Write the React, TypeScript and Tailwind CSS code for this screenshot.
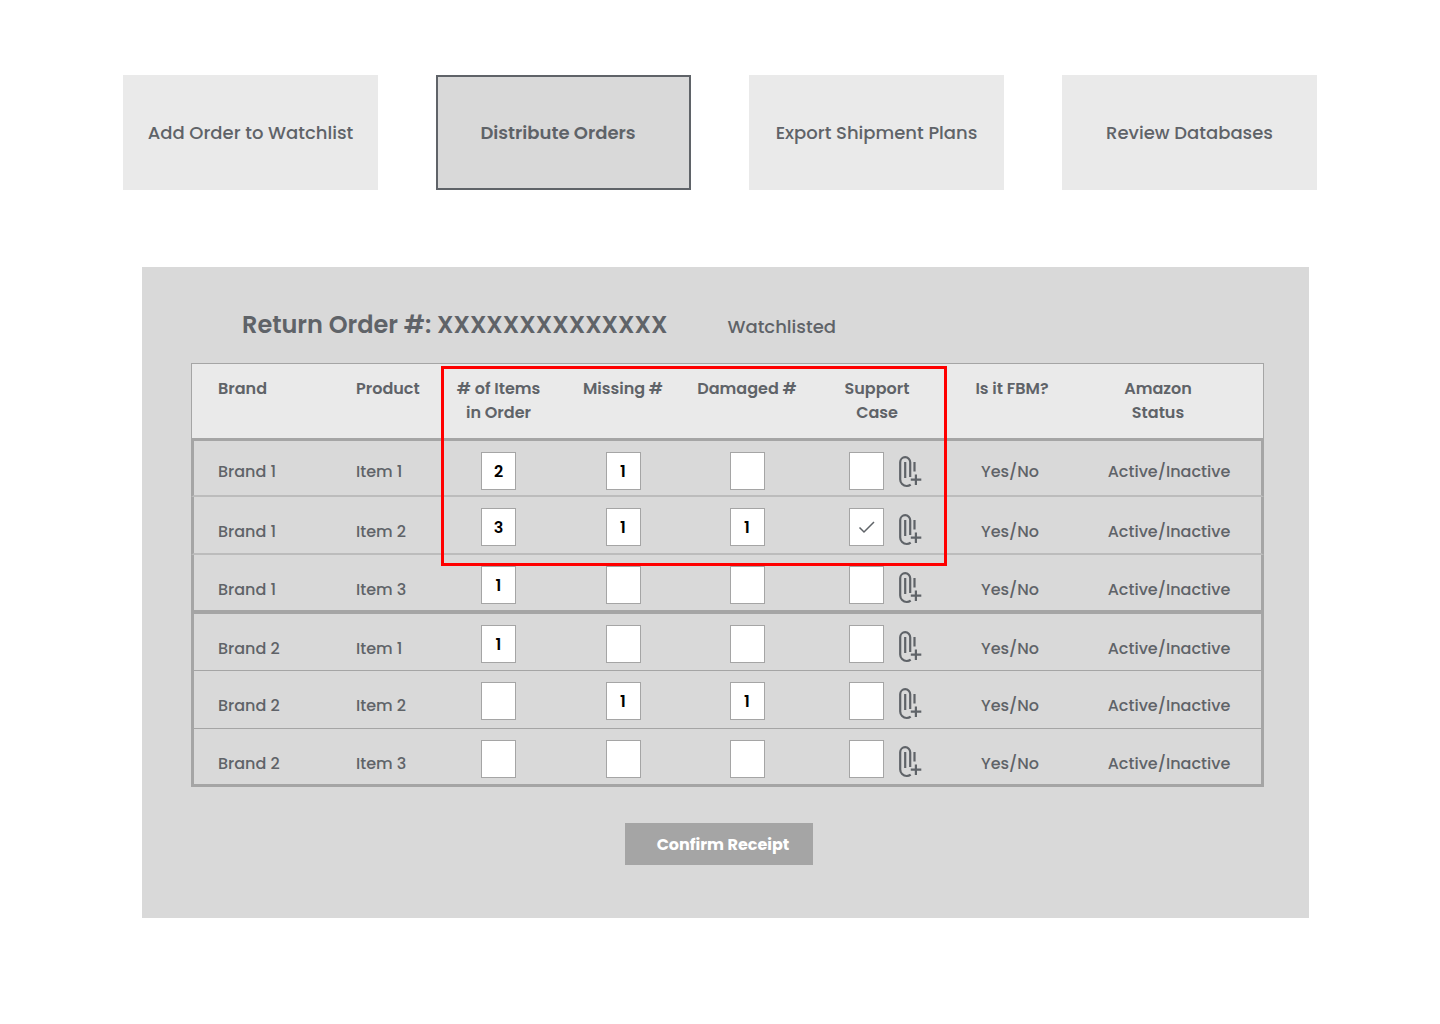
import { useState } from "react";
import clsx from "clsx";

const tabs = ["Add Order to Watchlist", "Distribute Orders", "Export Shipment Plans", "Review Databases"];

const columns = [
    { label: "Brand", width: "w-[138px]", align: "pl-[26px] text-left" },
    { label: "Product", width: "w-[107px]", align: "pl-[27px] text-left" },
    { label: "# of Items in Order", width: "w-[125px]", align: "px-4 text-center" },
    { label: "Missing #", width: "w-[124px]", align: "text-center" },
    { label: "Damaged #", width: "w-[124px]", align: "text-center" },
    { label: "Support Case", width: "w-[136px]", align: "px-8 text-center" },
    { label: "Is it FBM?", width: "w-[134px]", align: "text-center" },
    { label: "Amazon Status", width: "w-[185px]", align: "pl-10 pr-[66px] text-center" },
];

const rows = [
    { brand: "Brand 1", product: "Item 1", items: "2", missing: "1", damaged: "", support: false, line: "border-b-2 border-b-[#bcbcbc]", height: "h-[56px]" },
    { brand: "Brand 1", product: "Item 2", items: "3", missing: "1", damaged: "1", support: true, line: "border-b-2 border-b-[#bcbcbc]", height: "h-[58px]" },
    { brand: "Brand 1", product: "Item 3", items: "1", missing: "", damaged: "", support: false, line: "border-b-4", height: "h-[59px]" },
    { brand: "Brand 2", product: "Item 1", items: "1", missing: "", damaged: "", support: false, line: "border-b", height: "h-[57px]" },
    { brand: "Brand 2", product: "Item 2", items: "", missing: "1", damaged: "1", support: false, line: "border-b", height: "h-[58px]" },
    { brand: "Brand 2", product: "Item 3", items: "", missing: "", damaged: "", support: false, line: "border-b-3", height: "h-[58px]" },
];

function AttachIcon() {
    return (
        <svg viewBox="0 0 24 32" className="h-8 w-6" fill="none" stroke="currentColor" strokeWidth="2.2">
            <path d="M12.200 21V6.200a5 5 0 0 0-10 0v17.300a6.500 6.500 0 0 0 6.500 6.500c1.600 0 2.800-.4 4-1.300" />
            <path d="M7.200 6v16M16.500 6v9.500M17.900 18.500v10.500M12.800 23.700h10.500" />
        </svg>
    );
}

function QuantityBox({ label, value }: { label: string; value: string }) {
    return (
        <input
            type="text"
            aria-label={label}
            defaultValue={value}
            className="mx-auto block h-[38px] w-[35px] border border-[#a5a5a5] bg-white text-center text-base font-semibold text-black"
        />
    );
}

function SupportCase({ label, checked }: { label: string; checked: boolean }) {
    return (
        <div className="flex items-start gap-[14px] pl-10">
            <span className="relative block h-[38px] w-[35px]">
                <input
                    type="checkbox"
                    aria-label={label}
                    defaultChecked={checked}
                    className="peer block h-full w-full appearance-none border border-[#a5a5a5] bg-white"
                />
                <svg
                    viewBox="0 0 35 38"
                    className="pointer-events-none absolute inset-0 hidden peer-checked:block"
                    fill="none"
                    stroke="#5f6368"
                    strokeWidth="1.5"
                >
                    <path d="M10.500 19.500l4.500 4.500L25 14" />
                </svg>
            </span>
            <button type="button" aria-label={`Attach file to ${label}`} className="mt-[6px] group-first:mt-1">
                <AttachIcon />
            </button>
        </div>
    );
}

export default function App() {
    const [active, setActive] = useState("Distribute Orders");

    return (
        <div className="min-h-screen bg-white pb-[106px] pt-[75px] font-['Poppins','Inter',sans-serif] text-[#5f6368]">
            <nav className="grid grid-cols-4 gap-[58px] px-[123px]">
                {tabs.map((tab) => (
                    <button
                        key={tab}
                        type="button"
                        onClick={() => setActive(tab)}
                        className={clsx(
                            "h-[115px] whitespace-nowrap text-lg",
                            tab === active
                                ? "border-2 border-[#5f6368] bg-[#d9d9d9] pr-[11px] font-semibold"
                                : "bg-[#eaeaea] font-medium"
                        )}
                    >
                        {tab}
                    </button>
                ))}
            </nav>

            <main className="ml-[142px] mr-[131px] mt-[77px] bg-[#d9d9d9] pb-[53px] pl-[49px] pr-[45px] pt-10">
                <header className="flex items-baseline gap-[60px] pl-[51px]">
                    <h1 className="min-w-[425px] whitespace-nowrap text-2xl leading-9 font-semibold">Return Order #: XXXXXXXXXXXXXX</h1>
                    <p className="text-lg font-medium">Watchlisted</p>
                </header>

                <div className="relative mt-5">
                    <table className="w-full table-fixed border-separate border-spacing-0 text-base">
                        <thead>
                            <tr className="h-[75px] bg-[#eaeaea]">
                                {columns.map((col) => (
                                    <th
                                        key={col.label}
                                        scope="col"
                                        className={clsx(
                                            "border-t border-[#a5a5a5] pt-[13px] align-top leading-6 font-semibold first:border-l last:border-r",
                                            col.width,
                                            col.align
                                        )}
                                    >
                                        {col.label}
                                    </th>
                                ))}
                            </tr>
                            <tr aria-hidden="true">
                                <td colSpan={8} className="h-[3px] bg-[#a5a5a5] p-0" />
                            </tr>
                        </thead>
                        <tbody className="font-medium">
                            {rows.map((row) => {
                                const name = `${row.brand} ${row.product}`;
                                const cell = clsx("border-[#a5a5a5] p-0 align-top first:border-l-3 last:border-r-3", row.line);
                                const text = clsx(cell, "pt-[23px] leading-6 group-first:pt-[19px]");
                                const field = clsx(cell, "pt-[11px]");
                                return (
                                    <tr key={name} className={clsx("group", row.height)}>
                                        <td className={clsx(text, "pl-[24px]")}>{row.brand}</td>
                                        <td className={clsx(text, "pl-[27px]")}>{row.product}</td>
                                        <td className={field}>
                                            <QuantityBox label={`${name} items in order`} value={row.items} />
                                        </td>
                                        <td className={field}>
                                            <QuantityBox label={`${name} missing`} value={row.missing} />
                                        </td>
                                        <td className={field}>
                                            <QuantityBox label={`${name} damaged`} value={row.damaged} />
                                        </td>
                                        <td className={field}>
                                            <SupportCase label={`${name} support case`} checked={row.support} />
                                        </td>
                                        <td className={clsx(text, "pr-1 text-center")}>Yes/No</td>
                                        <td className={clsx(text, "pr-[2px] text-center")}>Active/Inactive</td>
                                    </tr>
                                );
                            })}
                        </tbody>
                    </table>
                    {/* Highlight over the editable columns */}
                    <div className="pointer-events-none absolute left-[23.3%] right-[29.5%] top-[3px] h-[200px] border-3 border-[#ff0000]" />
                </div>

                <div className="mt-9 flex justify-center pr-[18px]">
                    <button type="button" className="h-[42px] w-[188px] whitespace-nowrap bg-[#a5a5a5] pl-[9px] pt-px text-base font-bold text-white">
                        Confirm Receipt
                    </button>
                </div>
            </main>
        </div>
    );
}
